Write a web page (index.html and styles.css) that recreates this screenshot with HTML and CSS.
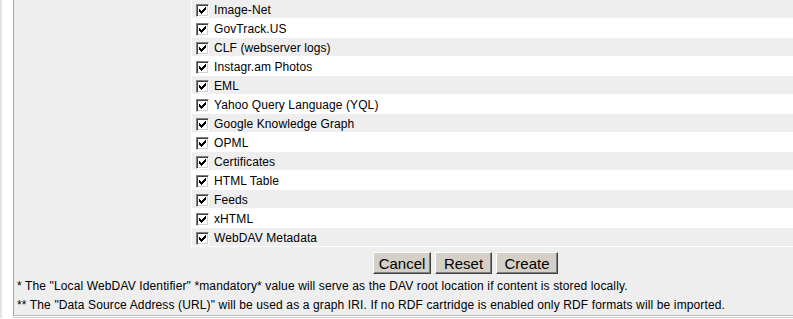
FILE: index.html
```html
<!DOCTYPE html>
<html lang="en">
<head>
    <meta charset="UTF-8">
    <title>New WebDAV Source</title>
    <link rel="stylesheet" href="styles.css">
</head>
<body>
    <div class="frame">
        <div class="panel">
            <div class="cartridges">
                <div class="row"><span class="cb"><svg width="7" height="7" viewBox="0 0 7 7" shape-rendering="crispEdges"><path d="M0 2h1v3H0zM1 3h1v3H1zM2 4h1v3H2zM3 3h1v3H3zM4 2h1v3H4zM5 1h1v3H5zM6 0h1v3H6z"/></svg></span>Image-Net</div>
                <div class="row"><span class="cb"><svg width="7" height="7" viewBox="0 0 7 7" shape-rendering="crispEdges"><path d="M0 2h1v3H0zM1 3h1v3H1zM2 4h1v3H2zM3 3h1v3H3zM4 2h1v3H4zM5 1h1v3H5zM6 0h1v3H6z"/></svg></span>GovTrack.US</div>
                <div class="row"><span class="cb"><svg width="7" height="7" viewBox="0 0 7 7" shape-rendering="crispEdges"><path d="M0 2h1v3H0zM1 3h1v3H1zM2 4h1v3H2zM3 3h1v3H3zM4 2h1v3H4zM5 1h1v3H5zM6 0h1v3H6z"/></svg></span>CLF (webserver logs)</div>
                <div class="row"><span class="cb"><svg width="7" height="7" viewBox="0 0 7 7" shape-rendering="crispEdges"><path d="M0 2h1v3H0zM1 3h1v3H1zM2 4h1v3H2zM3 3h1v3H3zM4 2h1v3H4zM5 1h1v3H5zM6 0h1v3H6z"/></svg></span>Instagr.am Photos</div>
                <div class="row"><span class="cb"><svg width="7" height="7" viewBox="0 0 7 7" shape-rendering="crispEdges"><path d="M0 2h1v3H0zM1 3h1v3H1zM2 4h1v3H2zM3 3h1v3H3zM4 2h1v3H4zM5 1h1v3H5zM6 0h1v3H6z"/></svg></span>EML</div>
                <div class="row"><span class="cb"><svg width="7" height="7" viewBox="0 0 7 7" shape-rendering="crispEdges"><path d="M0 2h1v3H0zM1 3h1v3H1zM2 4h1v3H2zM3 3h1v3H3zM4 2h1v3H4zM5 1h1v3H5zM6 0h1v3H6z"/></svg></span>Yahoo Query Language (YQL)</div>
                <div class="row"><span class="cb"><svg width="7" height="7" viewBox="0 0 7 7" shape-rendering="crispEdges"><path d="M0 2h1v3H0zM1 3h1v3H1zM2 4h1v3H2zM3 3h1v3H3zM4 2h1v3H4zM5 1h1v3H5zM6 0h1v3H6z"/></svg></span>Google Knowledge Graph</div>
                <div class="row"><span class="cb"><svg width="7" height="7" viewBox="0 0 7 7" shape-rendering="crispEdges"><path d="M0 2h1v3H0zM1 3h1v3H1zM2 4h1v3H2zM3 3h1v3H3zM4 2h1v3H4zM5 1h1v3H5zM6 0h1v3H6z"/></svg></span>OPML</div>
                <div class="row"><span class="cb"><svg width="7" height="7" viewBox="0 0 7 7" shape-rendering="crispEdges"><path d="M0 2h1v3H0zM1 3h1v3H1zM2 4h1v3H2zM3 3h1v3H3zM4 2h1v3H4zM5 1h1v3H5zM6 0h1v3H6z"/></svg></span>Certificates</div>
                <div class="row"><span class="cb"><svg width="7" height="7" viewBox="0 0 7 7" shape-rendering="crispEdges"><path d="M0 2h1v3H0zM1 3h1v3H1zM2 4h1v3H2zM3 3h1v3H3zM4 2h1v3H4zM5 1h1v3H5zM6 0h1v3H6z"/></svg></span>HTML Table</div>
                <div class="row"><span class="cb"><svg width="7" height="7" viewBox="0 0 7 7" shape-rendering="crispEdges"><path d="M0 2h1v3H0zM1 3h1v3H1zM2 4h1v3H2zM3 3h1v3H3zM4 2h1v3H4zM5 1h1v3H5zM6 0h1v3H6z"/></svg></span>Feeds</div>
                <div class="row"><span class="cb"><svg width="7" height="7" viewBox="0 0 7 7" shape-rendering="crispEdges"><path d="M0 2h1v3H0zM1 3h1v3H1zM2 4h1v3H2zM3 3h1v3H3zM4 2h1v3H4zM5 1h1v3H5zM6 0h1v3H6z"/></svg></span>xHTML</div>
                <div class="row"><span class="cb"><svg width="7" height="7" viewBox="0 0 7 7" shape-rendering="crispEdges"><path d="M0 2h1v3H0zM1 3h1v3H1zM2 4h1v3H2zM3 3h1v3H3zM4 2h1v3H4zM5 1h1v3H5zM6 0h1v3H6z"/></svg></span>WebDAV Metadata</div>
            </div>

            <div class="buttons">
                <button class="btn btn-cancel">Cancel</button>
                <button class="btn btn-reset">Reset</button>
                <button class="btn btn-create">Create</button>
            </div>

            <div class="notes">
                <div>* The "Local WebDAV Identifier" *mandatory* value will serve as the DAV root location if content is stored locally.</div>
                <div>** The "Data Source Address (URL)" will be used as a graph IRI. If no RDF cartridge is enabled only RDF formats will be imported.</div>
            </div>
        </div>
        <div class="bottom-line"></div>
    </div>
</body>
</html>
```

FILE: styles.css
```css
body {
    margin: 0;
    background: white;
    font-family: "Liberation Sans", Arial, sans-serif;
    overflow: hidden;
}

.frame {
    border-left: 2px solid #e2e2ea;
    padding-left: 11px;
    width: 1000px;
}

.panel {
    background: #eeeeee;
    border-left: 1px solid #a4a4a4;
    border-bottom: 1px solid #b8b8b8;
    padding-left: 1px;
}

.cartridges {
    margin-left: 176px;
    background: white;
    padding: 0 1px 1px 1px;
    display: flex;
    flex-direction: column;
    gap: 1px;
}

.row {
    height: 18px;
    display: flex;
    align-items: flex-start;
    font-size: 12px;
    line-height: 20px;
    letter-spacing: 0.1px;
    color: #000;
    padding-left: 4px;
}

.row:nth-child(odd) {
    background: #eeeeee;
}

.cb {
    display: block;
    flex: none;
    width: 13px;
    height: 13px;
    box-sizing: border-box;
    background: white;
    border: 1px solid;
    border-color: #808080 #ffffff #ffffff #808080;
    box-shadow: inset 1px 1px 0 #404040, inset -1px -1px 0 #d4d0c8;
    padding: 2px;
    margin: 4px 5px 0 0;
}

.cb svg {
    display: block;
}

.buttons {
    display: flex;
    gap: 4px;
    padding: 5px 0 0 358px;
    height: 24px;
}

.btn {
    font-family: "Liberation Sans", Arial, sans-serif;
    font-size: 15px;
    height: 22px;
    padding: 0;
    margin: 0;
    background: #d4d0c8;
    color: #000;
    border: 1px solid;
    border-color: #ffffff #404040 #404040 #ffffff;
    box-shadow: inset -1px -1px 0 #808080;
    border-radius: 0;
}

.btn-cancel { width: 58px; }
.btn-reset { width: 57px; }
.btn-create { width: 62px; }

.notes {
    font-size: 12px;
    line-height: 19px;
    letter-spacing: 0.13px;
    padding: 1px 0 0 2px;
    color: #000;
}

.bottom-line {
    margin-top: 1px;
    height: 1px;
    background: #c8c8c8;
}
```
